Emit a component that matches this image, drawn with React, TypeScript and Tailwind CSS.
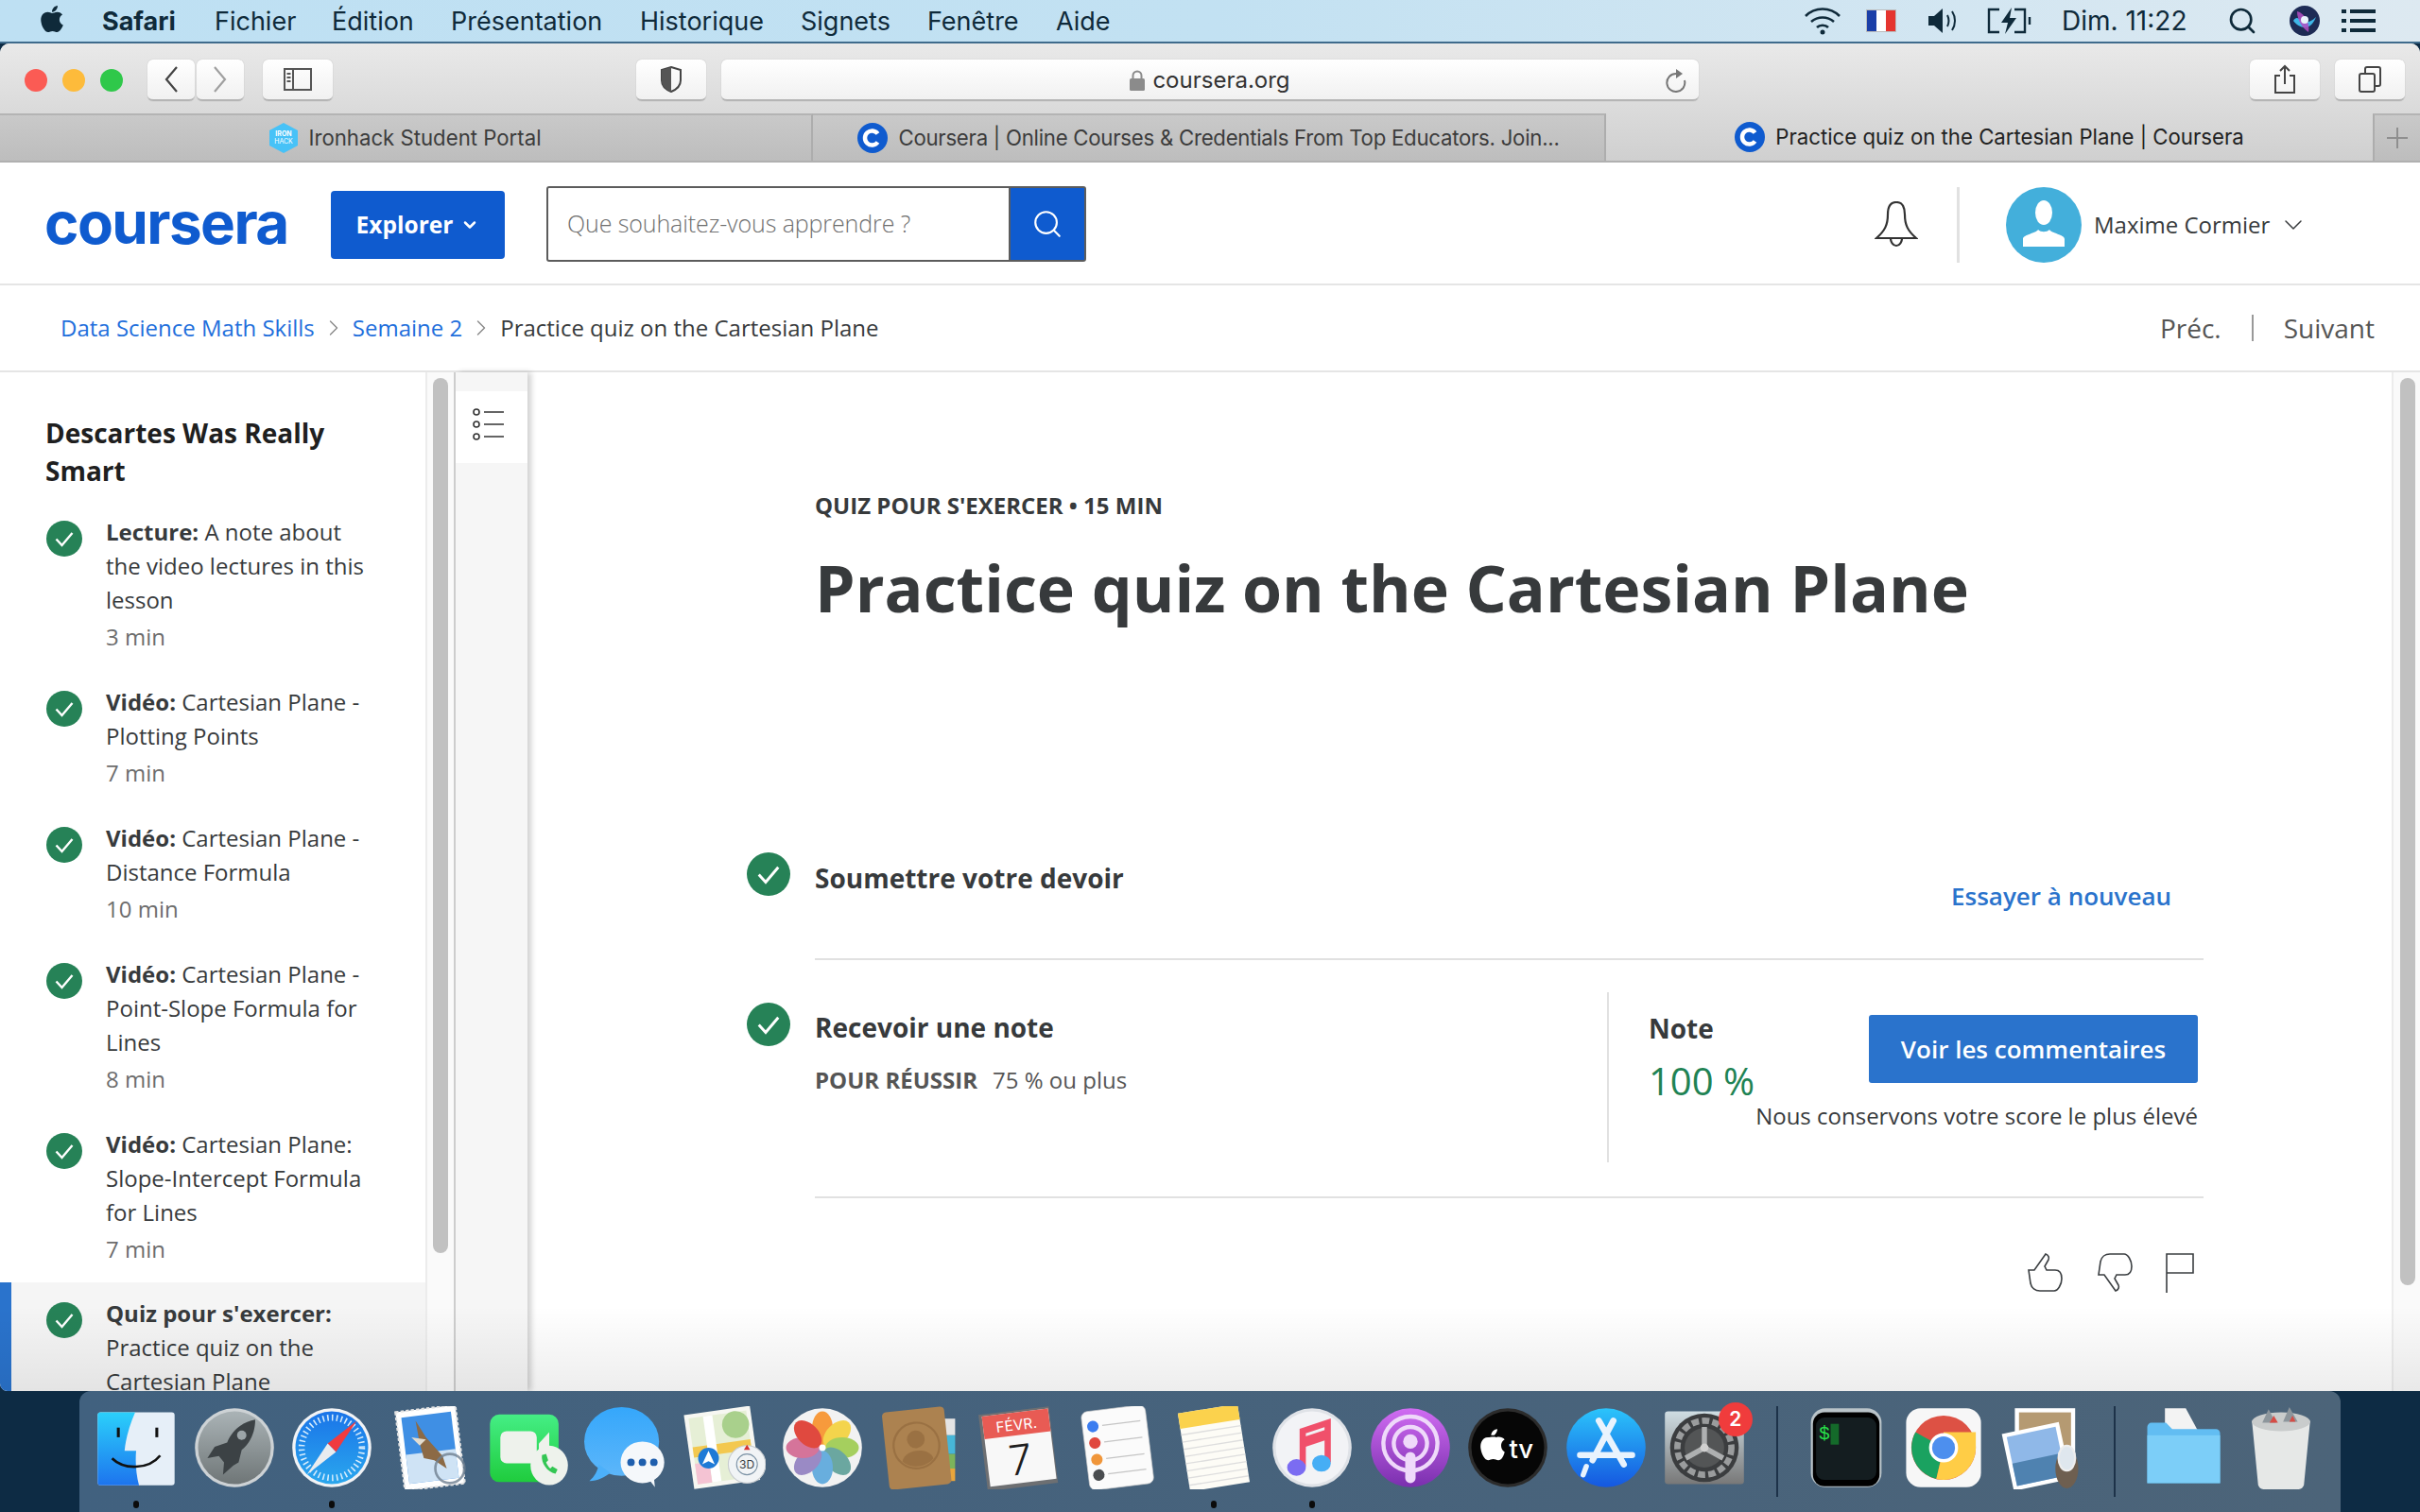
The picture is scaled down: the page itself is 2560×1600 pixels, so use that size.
import { ChevronDown, ChevronRight, Search } from "lucide-react";
import { FaApple } from "react-icons/fa";
import type { ReactNode } from "react";

const MENUS = [
  { label: "Fichier", w: "w-[86px]" },
  { label: "Édition", w: "w-[88px]" },
  { label: "Présentation", w: "w-[162px]" },
  { label: "Historique", w: "w-[132px]" },
  { label: "Signets", w: "w-[96px]" },
  { label: "Fenêtre", w: "w-[98px]" },
  { label: "Aide", w: "w-[57px]" },
];

const LESSONS = [
  { kind: "Lecture:", title: "A note about the video lectures in this lesson", time: "3 min" },
  { kind: "Vidéo:", title: "Cartesian Plane - Plotting Points", time: "7 min" },
  { kind: "Vidéo:", title: "Cartesian Plane - Distance Formula", time: "10 min" },
  { kind: "Vidéo:", title: "Cartesian Plane - Point-Slope Formula for Lines", time: "8 min" },
  { kind: "Vidéo:", title: "Cartesian Plane: Slope-Intercept Formula for Lines", time: "7 min" },
];

function CheckBadge({ size }: { size: number }) {
  return (
    <svg width={size} height={size} viewBox="0 0 38 38" className="shrink-0">
      <circle cx="19" cy="19" r="19" fill="#268257" />
      <path d="M10.5 19.5l6 6.5L27.5 13" fill="none" stroke="#fff" strokeWidth="2.4" />
    </svg>
  );
}

function CourseraFavicon() {
  return (
    <svg width="32" height="32" viewBox="0 0 32 32" className="shrink-0">
      <circle cx="16" cy="16" r="16" fill="#0f5bcf" />
      <path d="M21.5 11.5a7.5 7.5 0 1 0 0 9" fill="none" stroke="#fff" strokeWidth="4.5" />
    </svg>
  );
}

function IronhackFavicon() {
  return (
    <svg width="30" height="32" viewBox="0 0 30 32" className="shrink-0">
      <polygon points="15,0 30,8 30,24 15,32 0,24 0,8" fill="#47c2f7" />
      <text x="15" y="14" textAnchor="middle" fontSize="7" fontWeight="700" fill="#fff" fontFamily="Inter">IRON</text>
      <text x="15" y="22" textAnchor="middle" fontSize="7" fill="#fff" fontFamily="Inter">HACK</text>
    </svg>
  );
}

function ToolButton({ className, children }: { className: string; children?: ReactNode }) {
  return (
    <div className={`h-[44px] bg-gradient-to-b from-white to-[#f1f1f1] rounded-[6px] border-b-2 border-[#b5b5b5] shadow-[0_0_1px_rgba(0,0,0,0.3)] flex items-center justify-center ${className}`}>
      {children}
    </div>
  );
}

function Tab({ className, icon, label, active }: { className: string; icon: ReactNode; label: string; active?: boolean }) {
  return (
    <div className={`h-full flex items-center justify-center gap-[11px] text-[22.2px] ${active ? "text-[#222]" : "text-[#3c3c3c] border-r-2 border-[#adadad] bg-gradient-to-b from-[#c9c9c9] to-[#bdbdbd] border-t-2 border-t-[#b4b4b4]"} ${className}`}>
      {icon}
      <span className="whitespace-nowrap">{label}</span>
    </div>
  );
}

function Vert({ id, from, to }: { id: string; from: string; to: string }) {
  return (
    <defs>
      <linearGradient id={id} x1="0" y1="0" x2="0" y2="1">
        <stop offset="0" stopColor={from} />
        <stop offset="1" stopColor={to} />
      </linearGradient>
    </defs>
  );
}

/* dock icons, all on an 80 x 80 canvas */
const DOCK: { el: ReactNode; dot?: boolean }[] = [
  {
    dot: true,
    el: (
      <g transform="translate(3 4) scale(0.925)">
        <Vert id="finder" from="#2bd0fb" to="#1d74ee" />
        <rect x="0" y="2" width="80" height="76" rx="3" fill="#e6eff8" />
        <path d="M3 2h36c-6 14-10 28-11 40h12c-1 12 0 25 3 36H3a3 3 0 0 1-3-3V5a3 3 0 0 1 3-3z" fill="url(#finder)" />
        <rect x="20" y="18" width="3" height="10" fill="#111" />
        <rect x="60" y="18" width="3" height="10" fill="#111" />
        <path d="M15 50c12 12 38 12 50-3" fill="none" stroke="#111" strokeWidth="2.6" />
      </g>
    ),
  },
  {
    el: (
      <>
        <Vert id="launch" from="#aab3b6" to="#6f7677" />
        <circle cx="40" cy="40" r="38" fill="#cdd2d5" />
        <circle cx="40" cy="40" r="35" fill="url(#launch)" />
        <path d="M60 13c-12 2-22 10-27 22l-12 4-7 11 11-2 5 6-1 12 10-9 5-3 3-12c9-7 13-18 13-29z" fill="#3c4245" />
        <circle cx="47" cy="28" r="4.5" fill="#9ca5a8" />
      </>
    ),
  },
  {
    dot: true,
    el: (
      <>
        <Vert id="safari" from="#1a74e8" to="#2aa7ee" />
        <circle cx="40" cy="40" r="38" fill="#f2f3f5" />
        <circle cx="40" cy="40" r="35" fill="url(#safari)" />
        <circle cx="40" cy="40" r="29" fill="none" stroke="#d6ecfc" strokeWidth="6" strokeDasharray="1.4 3" />
        <polygon points="64,14 36,36 44,44" fill="#f03b3f" />
        <polygon points="16,66 36,36 44,44" fill="#e9ecef" />
      </>
    ),
  },
  {
    el: (
      <>
        <g transform="rotate(-7 40 40)">
          <rect x="11" y="2" width="58" height="76" fill="#fff" stroke="#e4e4e4" strokeWidth="2" strokeDasharray="3 2" />
          <rect x="16" y="8" width="48" height="64" fill="#3f8fe4" />
          <rect x="16" y="44" width="48" height="28" fill="#cfe3f5" />
        </g>
        <path d="M26 14l10 16 16 18 4 12-12-8-10-2-4-14z" fill="#8c6a45" />
        <path d="M30 38l-8-8 14 2z" fill="#e2dccf" />
        <circle cx="59" cy="60" r="14" fill="none" stroke="#6f7f90" strokeWidth="2.4" opacity="0.8" />
      </>
    ),
  },
  {
    el: (
      <>
        <Vert id="ft" from="#45ee85" to="#1fcc3d" />
        <rect x="3" y="8" width="66" height="65" rx="9" fill="url(#ft)" />
        <rect x="13" y="24" width="35" height="31" rx="6" fill="#eef2ec" />
        <polygon points="50,36 60,25 60,54 50,44" fill="#eef2ec" />
        <ellipse cx="60" cy="57" rx="18" ry="19" fill="#eef2ec" />
        <path d="M53 47c-1 8 5 16 13 18l2-4-5-3-2 2c-2-2-3-4-4-6l2-2-2-6z" fill="#33c653" />
      </>
    ),
  },
  {
    el: (
      <>
        <Vert id="msg" from="#35a7fb" to="#5cb6fa" />
        <ellipse cx="36" cy="34" rx="36" ry="33" fill="url(#msg)" />
        <path d="M14 56c-1 6-4 12-9 16 8 0 15-4 20-8z" fill="#4cb0fa" />
        <ellipse cx="56" cy="54" rx="21" ry="20" fill="#f5f8fb" />
        <path d="M62 70l6 8-1-10z" fill="#f5f8fb" />
        <circle cx="45" cy="54" r="3.6" fill="#1f5fae" />
        <circle cx="56" cy="54" r="3.6" fill="#1f5fae" />
        <circle cx="67" cy="54" r="3.6" fill="#1f5fae" />
      </>
    ),
  },
  {
    el: (
      <>
        <g transform="rotate(-8 36 40)">
          <rect x="6" y="4" width="64" height="72" fill="#f7f7f2" />
          <rect x="10" y="8" width="56" height="64" fill="#e6efd6" />
          <rect x="10" y="36" width="56" height="10" fill="#f3c84f" />
          <rect x="24" y="8" width="9" height="64" fill="#fff" />
          <rect x="10" y="52" width="14" height="20" fill="#f4c3d3" />
          <circle cx="54" cy="20" r="13" fill="#a9d08c" />
        </g>
        <circle cx="25" cy="50" r="10" fill="#1f7ad6" />
        <polygon points="25,43 31,56 25,53 19,56" fill="#fff" />
        <circle cx="62" cy="56" r="18" fill="#f1f4f6" stroke="#c8ccd0" />
        <circle cx="62" cy="56" r="10" fill="none" stroke="#7c93a6" />
        <text x="62" y="60" textAnchor="middle" fontSize="11" fill="#3a3f44" fontFamily="Inter">3D</text>
        <polygon points="62,37 65,42 59,42" fill="#d6322f" />
      </>
    ),
  },
  {
    el: (
      <>
        <circle cx="40" cy="40" r="38" fill="#f2f2f2" />
        <ellipse cx="40" cy="21" rx="10" ry="16" fill="#f79a3c" />
        <ellipse cx="54" cy="27" rx="10" ry="16" fill="#f4d44c" transform="rotate(45 54 27)" />
        <ellipse cx="59" cy="40" rx="16" ry="10" fill="#a5cf5e" />
        <ellipse cx="54" cy="53" rx="10" ry="16" fill="#6ba7a0" transform="rotate(-45 54 53)" />
        <ellipse cx="40" cy="59" rx="10" ry="16" fill="#68aede" />
        <ellipse cx="26" cy="53" rx="10" ry="16" fill="#9a8ac5" transform="rotate(45 26 53)" />
        <ellipse cx="21" cy="40" rx="16" ry="10" fill="#d5749a" />
        <ellipse cx="26" cy="27" rx="10" ry="16" fill="#e0493f" transform="rotate(-45 26 27)" />
        <circle cx="40" cy="40" r="3" fill="#fff" />
      </>
    ),
  },
  {
    el: (
      <>
        <rect x="60" y="12" width="14" height="16" fill="#e4e4e4" />
        <rect x="60" y="28" width="14" height="18" fill="#47b6d8" />
        <rect x="60" y="46" width="14" height="14" fill="#7cb35b" />
        <rect x="60" y="60" width="14" height="12" fill="#e8a53c" />
        <g transform="rotate(-6 36 40)">
          <rect x="7" y="3" width="60" height="75" rx="4" fill="#ac8250" />
          <circle cx="37" cy="38" r="22" fill="none" stroke="#9a7143" strokeWidth="2" />
          <circle cx="37" cy="32" r="8.5" fill="#9a7143" />
          <path d="M22 52c3-12 27-12 30 0-8 8-22 8-30 0z" fill="#9a7143" />
        </g>
      </>
    ),
  },
  {
    el: (
      <g transform="rotate(-7 40 40)">
        <rect x="6" y="4" width="68" height="74" fill="#6d6f72" />
        <rect x="9" y="6" width="64" height="68" fill="#f8f8f8" />
        <rect x="9" y="6" width="64" height="22" fill="#e85b54" />
        <text x="41" y="23" textAnchor="middle" fontSize="14" fill="#fff" fontFamily="Inter">FÉVR.</text>
        <text x="41" y="66" textAnchor="middle" fontSize="40" fill="#1e1e1e" fontFamily="Inter" fontWeight="300">7</text>
      </g>
    ),
  },
  {
    el: (
      <g transform="rotate(-7 40 40)">
        <rect x="10" y="2" width="62" height="76" rx="6" fill="#fbfbfb" stroke="#ccc" strokeWidth="0.6" />
        {[
          ["#3b7df0", 17],
          ["#e0483e", 33],
          ["#f0963a", 49],
          ["#4a4d50", 64],
        ].map(([c, y]) => (
          <g key={String(c)}>
            <circle cx="20" cy={Number(y)} r="5.5" fill={String(c)} />
            <line x1="29" x2="66" y1={Number(y)} y2={Number(y)} stroke="#c5c5c5" strokeWidth="1.2" />
          </g>
        ))}
      </g>
    ),
  },
  {
    dot: true,
    el: (
      <g transform="rotate(-9 40 40)">
        <rect x="11" y="2" width="58" height="76" fill="#fdfcf6" />
        <rect x="11" y="2" width="58" height="15" fill="#fbd24d" />
        {[23, 30, 37, 44, 51, 58, 65, 72].map((y) => (
          <line key={y} x1="11" x2="69" y1={y} y2={y} stroke="#dedede" strokeWidth="1.2" />
        ))}
      </g>
    ),
  },
  {
    dot: true,
    el: (
      <>
        <circle cx="40" cy="40" r="38" fill="#dfe2e7" />
        <circle cx="40" cy="40" r="35" fill="#f2f3f6" />
        <path d="M31 58V24l24-8v38" fill="none" stroke="#f0506b" strokeWidth="6" />
        <path d="M31 30l24-8v10l-24 8z" fill="#f0506b" />
        <ellipse cx="25" cy="59" rx="9" ry="8" fill="#7b6cf2" />
        <ellipse cx="49" cy="55" rx="9" ry="8" fill="#46aef5" />
      </>
    ),
  },
  {
    el: (
      <>
        <Vert id="pod" from="#d06cf2" to="#7a2fae" />
        <circle cx="40" cy="40" r="38" fill="url(#pod)" />
        <circle cx="40" cy="36" r="26" fill="none" stroke="#efd9fa" strokeWidth="4" />
        <circle cx="40" cy="36" r="16" fill="none" stroke="#efd9fa" strokeWidth="4" />
        <circle cx="40" cy="34" r="7" fill="#efd9fa" />
        <rect x="35" y="44" width="10" height="30" rx="5" fill="#efd9fa" />
      </>
    ),
  },
  {
    el: (
      <>
        <circle cx="40" cy="40" r="38" fill="#2c2c2c" />
        <circle cx="40" cy="40" r="35" fill="#060606" />
        <text x="53" y="50" textAnchor="middle" fontSize="25" fill="#fff" fontFamily="Inter" fontWeight="500">tv</text>
        <path d="M29 30c-3-1-6 0-8 0-5 0-8 5-7 11 1 6 4 11 7 11 2 0 3-1 5-1s3 1 5 1c3 0 5-4 6-8-4-2-5-9 0-12-2-2-5-3-8-2zM27 28c2-2 3-4 3-6-3 0-6 3-6 6z" fill="#fff" />
      </>
    ),
  },
  {
    el: (
      <>
        <Vert id="store" from="#2bc4fb" to="#1557e0" />
        <circle cx="40" cy="40" r="38" fill="url(#store)" />
        <path d="M47 14L27 52M33 14l24 42M15 47h50" stroke="#e9f3fd" strokeWidth="6" strokeLinecap="round" fill="none" />
        <path d="M21 58l-3 8" stroke="#e9f3fd" strokeWidth="5" strokeLinecap="round" />
      </>
    ),
  },
  {
    el: (
      <>
        <Vert id="prefs" from="#cfdde3" to="#787878" />
        <rect x="2" y="5" width="76" height="70" rx="3" fill="url(#prefs)" />
        <circle cx="40" cy="40" r="33" fill="#3b3d3f" />
        <circle cx="40" cy="40" r="26" fill="none" stroke="#9a9c9d" strokeWidth="6" strokeDasharray="7 3" />
        <circle cx="40" cy="40" r="19" fill="#535556" />
        <path d="M40 40V20M40 40l18 10M40 40L22 50" stroke="#aeb0b1" strokeWidth="5" />
        <circle cx="40" cy="40" r="4" fill="#d0d0d0" />
      </>
    ),
  },
  {
    el: (
      <>
        <rect x="6" y="2" width="68" height="76" rx="14" fill="#b9c3c8" />
        <rect x="8" y="6" width="64" height="71" rx="11" fill="#000" />
        <rect x="11" y="11" width="58" height="60" rx="8" fill="#141d20" />
        <text x="19" y="32" textAnchor="middle" fontSize="18" fill="#28e04a" fontFamily="Liberation Mono">$</text>
        <rect x="25" y="17" width="8" height="20" fill="#146a2a" />
      </>
    ),
  },
  {
    el: (
      <>
        <rect x="4" y="2" width="72" height="76" rx="14" fill="#f7f7f7" />
        <circle cx="40" cy="40" r="31" fill="#dd5144" />
        <path d="M40 40L13 25A31 31 0 0 0 33 70z" fill="#1aa260" />
        <path d="M40 40L33 70A31 31 0 0 0 71 40V25H40z" fill="#ffcd46" />
        <circle cx="40" cy="40" r="14" fill="#fff" />
        <circle cx="40" cy="40" r="11" fill="#4d8fee" />
      </>
    ),
  },
  {
    el: (
      <>
        <rect x="14" y="2" width="58" height="60" fill="#fff" />
        <rect x="18" y="6" width="50" height="46" fill="#b59a72" />
        <g transform="rotate(-12 36 45)">
          <rect x="6" y="20" width="56" height="56" fill="#fff" />
          <rect x="10" y="24" width="48" height="48" fill="#8fb8e8" />
          <rect x="10" y="50" width="48" height="22" fill="#4f82b0" />
        </g>
        <ellipse cx="64" cy="60" rx="11" ry="19" fill="#6e5f50" />
        <ellipse cx="64" cy="50" rx="8" ry="12" fill="#dfe7ee" stroke="#eee" strokeWidth="2" />
      </>
    ),
  },
  {
    el: (
      <>
        <path d="M22 2h20l14 26H22z" fill="#f3f3f3" />
        <path d="M5 20a4 4 0 0 1 4-4h14l6 6h42a4 4 0 0 1 4 4v48H5z" fill="#62bdf2" />
        <rect x="5" y="28" width="70" height="46" fill="#7ccef8" />
      </>
    ),
  },
  {
    el: (
      <>
        <path d="M12 14h56l-6 62a6 6 0 0 1-6 4H24a6 6 0 0 1-6-4z" fill="#e6e8e7" />
        <ellipse cx="40" cy="15" rx="28" ry="9" fill="#c9cccc" />
        <path d="M22 16l6-13 7 13zM42 15l6-14 8 14z" fill="#8d969c" />
        <path d="M29 16l4-7 4 7zM48 15l3-6 3 6z" fill="#d64c45" />
      </>
    ),
  },
];

function DockSlot({ el, dot, badge }: { el: ReactNode; dot?: boolean; badge?: boolean }) {
  return (
    <div className="w-[103.7px] h-full relative flex flex-col items-center pt-[16px]">
      <svg width="88" height="88" viewBox="0 0 80 80">{el}</svg>
      {dot && <span className="mt-[12px] w-[6px] h-[8px] rounded-full bg-[#0b0b0b]" />}
      {badge && (
        <span className="absolute top-[12px] right-[1px] w-[36px] h-[36px] rounded-full bg-[#f03c3c] text-white text-[21px] font-semibold flex items-center justify-center">
          2
        </span>
      )}
    </div>
  );
}

function DockSep() {
  return (
    <div className="w-[46px] h-full flex justify-center pl-[5px] pt-[16px]">
      <span className="w-[2px] h-[96px] bg-[#1d3249]" />
    </div>
  );
}

export default function App() {
  return (
    <div className="w-[2560px] h-[1600px] overflow-hidden flex flex-col bg-[#0d2b44] font-['Inter',sans-serif]">
      {/* menu bar */}
      <div className="h-[46px] shrink-0 flex items-center justify-between bg-gradient-to-r from-[#bee0f3] via-[#c2e1f2] to-[#dde9f1] border-b-2 border-[#3f6b8c] text-[#0f2a3a] text-[27px]">
        <div className="flex items-center pt-[2px]">
          <FaApple className="ml-[40px] w-[30px] h-[32px] -mt-[6px] text-[#0f2a3a]" />
          <span className="ml-[38px] w-[81px] font-bold whitespace-nowrap">Safari</span>
          {MENUS.map((m) => (
            <span key={m.label} className={`ml-[38px] whitespace-nowrap ${m.w}`}>
              {m.label}
            </span>
          ))}
        </div>
        <div className="flex items-center">
          <svg width="42" height="32" viewBox="0 0 42 32" fill="none" stroke="#0f2a3a" strokeWidth="2.6">
            <path d="M3 11c10-10 26-10 36 0M9 17c7-6 17-6 24 0M15 23c3-3 9-3 12 0" />
            <circle cx="21" cy="28" r="2.5" fill="#0f2a3a" stroke="none" />
          </svg>
          <div className="ml-[25px] w-[32px] h-[24px] flex border border-[#bbb]">
            <span className="flex-1 bg-[#1b3fa8]" />
            <span className="flex-1 bg-white" />
            <span className="flex-1 bg-[#e5352f]" />
          </div>
          <svg className="ml-[32px]" width="34" height="30" viewBox="0 0 34 30" fill="none" stroke="#0f2a3a" strokeWidth="2">
            <path d="M2 10h6l9-8v26l-9-8H2z" fill="#0f2a3a" stroke="none" />
            <path d="M22 9c2 4 2 8 0 12M27 5c4 6 4 14 0 20" />
          </svg>
          <svg className="ml-[29px]" width="48" height="30" viewBox="0 0 48 30" fill="none" stroke="#0f2a3a" strokeWidth="2.4">
            <path d="M14 3H3v24h11M30 3h11v24H30M46 11v8" />
            <path d="M27 1L16 17h7l-3 12 12-17h-7z" fill="#0f2a3a" stroke="none" />
          </svg>
          <span className="ml-[32px] w-[134px] whitespace-nowrap text-[28px]">Dim. 11:22</span>
          <Search className="ml-[41px] w-[32px] h-[32px]" strokeWidth={2} />
          <svg className="ml-[34px]" width="32" height="32" viewBox="0 0 32 32">
            <circle cx="16" cy="16" r="16" fill="#1d2b55" />
            <path d="M4 16c6-10 10 10 24-4-6 16-18 12-24 4z" fill="#3fb7e8" />
            <path d="M8 6c8 2 14 12 12 22C14 24 8 16 8 6z" fill="#b34fc4" opacity="0.85" />
            <circle cx="16" cy="15" r="4" fill="#e8f3fb" />
          </svg>
          <svg className="ml-[23px] mr-[47px]" width="36" height="26" viewBox="0 0 36 26" fill="#0f2a3a">
            <rect x="0" y="1" width="5" height="4" />
            <rect x="9" y="1" width="27" height="4" />
            <rect x="0" y="11" width="5" height="4" />
            <rect x="9" y="11" width="27" height="4" />
            <rect x="0" y="21" width="5" height="4" />
            <rect x="9" y="21" width="27" height="4" />
          </svg>
        </div>
      </div>

      {/* safari window */}
      <div className="h-[1426px] shrink-0 relative flex flex-col overflow-hidden rounded-t-[10px] rounded-bl-[8px] bg-white">
        <div className="h-[126px] shrink-0 flex flex-col bg-gradient-to-b from-[#e9e9e9] to-[#cfcfcf]">
          <div className="h-[74px] shrink-0 flex items-center pt-[3px]">
            <span className="ml-[26px] w-[24px] h-[24px] rounded-full bg-[#fb5b54]" />
            <span className="ml-[16px] w-[24px] h-[24px] rounded-full bg-[#fdbb3b]" />
            <span className="ml-[16px] w-[24px] h-[24px] rounded-full bg-[#2fc84a]" />
            <ToolButton className="ml-[26px] w-[50px]">
              <svg width="16" height="30" viewBox="0 0 16 30" fill="none" stroke="#444" strokeWidth="2.2"><path d="M14 2L3 15l11 13" /></svg>
            </ToolButton>
            <ToolButton className="ml-[2px] w-[50px]">
              <svg width="16" height="30" viewBox="0 0 16 30" fill="none" stroke="#a0a0a0" strokeWidth="2.2"><path d="M2 2l11 13L2 28" /></svg>
            </ToolButton>
            <ToolButton className="ml-[20px] w-[74px]">
              <svg width="30" height="24" viewBox="0 0 30 24" fill="none" stroke="#555" strokeWidth="2">
                <rect x="1" y="1" width="28" height="22" />
                <path d="M10 1v22" />
                <path d="M3.5 6h4M3.5 10h4M3.5 14h4" />
              </svg>
            </ToolButton>
            <ToolButton className="ml-[321px] w-[74px]">
              <svg width="24" height="28" viewBox="0 0 24 28">
                <path d="M12 1l10 3v11c0 6-5 10-10 12C7 25 2 21 2 15V4z" fill="none" stroke="#444" strokeWidth="2" />
                <path d="M12 1L2 4v11c0 6 5 10 10 12z" fill="#555" />
              </svg>
            </ToolButton>
            <ToolButton className="ml-[16px] w-[1034px] relative pt-[2px]">
              <svg className="mr-[8px]" width="16" height="22" viewBox="0 0 16 22" fill="#8b8b8b">
                <rect x="0" y="9" width="16" height="13" rx="1.5" />
                <path d="M3.5 9V6a4.5 4.5 0 0 1 9 0v3" fill="none" stroke="#8b8b8b" strokeWidth="2" />
              </svg>
              <span className="text-[24px] text-[#333] leading-none">coursera.org</span>
              <svg className="absolute right-[12px] top-[9px]" width="24" height="28" viewBox="0 0 24 28" fill="none" stroke="#777" strokeWidth="2">
                <path d="M12 6a9.5 9.5 0 1 0 9 7" />
                <path d="M12 1l7 5-7 5z" fill="#777" stroke="none" />
              </svg>
            </ToolButton>
            <ToolButton className="ml-[583px] w-[74px]">
              <svg width="24" height="32" viewBox="0 0 24 32" fill="none" stroke="#444" strokeWidth="2">
                <path d="M7 12H2v18h20V12h-5M12 21V2M7 7l5-5 5 5" />
              </svg>
            </ToolButton>
            <ToolButton className="ml-[16px] w-[74px]">
              <svg width="26" height="28" viewBox="0 0 26 28" fill="none" stroke="#444" strokeWidth="2">
                <rect x="2" y="8" width="16" height="19" rx="2" />
                <path d="M8 8V3a2 2 0 0 1 2-2h12a2 2 0 0 1 2 2v16a2 2 0 0 1-2 2h-4" />
              </svg>
            </ToolButton>
          </div>
          <div className="h-[52px] shrink-0 flex border-b-2 border-[#b0b0b0]">
            <Tab className="w-[860px]" icon={<IronhackFavicon />} label="Ironhack Student Portal" />
            <Tab className="w-[839px] tracking-[-0.25px]" icon={<CourseraFavicon />} label="Coursera | Online Courses & Credentials From Top Educators. Join..." />
            <Tab className="w-[811px]" active icon={<CourseraFavicon />} label="Practice quiz on the Cartesian Plane | Coursera" />
            <div className="flex-1 flex items-center justify-center bg-gradient-to-b from-[#c9c9c9] to-[#bdbdbd] border-l-2 border-[#adadad] border-t-2 border-t-[#b4b4b4]">
              <svg width="22" height="22" viewBox="0 0 22 22" stroke="#8f8f8f" strokeWidth="2"><path d="M11 0v22M0 11h22" /></svg>
            </div>
          </div>
        </div>

        <div className="flex-1 min-h-0 flex flex-col font-['Open_Sans',sans-serif] text-[#373a3c]">
          {/* coursera header */}
          <div className="h-[130px] shrink-0 flex items-center border-b-2 border-[#e5e5e5] pt-[4px]">
            <span className="ml-[47px] w-[256px] text-[#0f5bcf] text-[62px] leading-none font-bold tracking-[-1.6px] font-['Inter',sans-serif] -mt-[4px] whitespace-nowrap">coursera</span>
            <div className="ml-[47px] w-[184px] h-[72px] rounded-[4px] bg-[#0f5bcf] text-white font-bold text-[24.5px] flex items-center justify-center gap-[8px]">
              Explorer
              <ChevronDown className="w-[20px] h-[20px]" strokeWidth={3} />
            </div>
            <div className="ml-[44px] w-[571px] h-[80px] flex border-2 border-[#5c5c5c] rounded-[3px] -mt-[2px]">
              <div className="flex-1 flex items-center pl-[20px] text-[25px] tracking-[-0.1px] font-light text-[#6f6f6f]">Que souhaitez-vous apprendre ?</div>
              <div className="w-[80px] bg-[#0f5bcf] flex items-center justify-center border-l-2 border-[#5c5c5c]">
                <Search className="w-[34px] h-[34px] text-white" strokeWidth={1.5} />
              </div>
            </div>
            <svg className="ml-[834px] shrink-0" width="46" height="50" viewBox="0 0 46 50" fill="none" stroke="#333" strokeWidth="2.2">
              <path d="M23 1c-7 0-9 6-9 13 0 11-3 17-12 25h42c-9-8-12-14-12-25 0-7-2-13-9-13z" />
              <path d="M17 39a6 8 0 0 0 12 0" />
            </svg>
            <span className="ml-[41px] w-[3px] h-[80px] bg-[#e1e1e1]" />
            <svg className="ml-[49px] shrink-0" width="80" height="80" viewBox="0 0 80 80">
              <circle cx="40" cy="40" r="40" fill="#43afdb" />
              <ellipse cx="40" cy="27" rx="9" ry="13" fill="#fff" />
              <path d="M18 63v-8c0-5 14-6 16-10 3 3 9 3 12 0 2 4 16 5 16 10v8z" fill="#fff" />
            </svg>
            <span className="ml-[13px] text-[24px] whitespace-nowrap">Maxime Cormier</span>
            <ChevronDown className="ml-[9px] w-[32px] h-[32px]" strokeWidth={1.1} />
          </div>

          {/* breadcrumb */}
          <div className="h-[92px] shrink-0 flex items-center border-b-2 border-[#e5e5e5] text-[24px] pl-[64px] pr-[48px]">
            <span className="text-[#1f6fdc]">Data Science Math Skills</span>
            <ChevronRight className="mx-[6px] w-[28px] h-[28px] text-[#888]" strokeWidth={1.2} />
            <span className="text-[#1f6fdc]">Semaine 2</span>
            <ChevronRight className="mx-[6px] w-[28px] h-[28px] text-[#888]" strokeWidth={1.2} />
            <span>Practice quiz on the Cartesian Plane</span>
            <div className="ml-auto flex items-center text-[28px] text-[#555]">
              <span>Préc.</span>
              <span className="mx-[32px] w-[2px] h-[28px] bg-[#999]" />
              <span>Suivant</span>
            </div>
          </div>

          <div className="flex-1 min-h-0 flex">
            {/* lesson list */}
            <div className="w-[450px] shrink-0 overflow-hidden flex flex-col pt-[44px]">
              <h2 className="px-[48px] text-[28px] leading-[40px] font-bold text-[#1f1f1f]">Descartes Was Really Smart</h2>
              <div className="mt-[27px] flex flex-col gap-[32px]">
                {LESSONS.map((l, i) => (
                  <div key={i} className="flex pl-[49px] pr-[56px]">
                    <div className="pt-[6px]"><CheckBadge size={38} /></div>
                    <div className="ml-[25px]">
                      <p className="text-[24px] leading-[36px]">
                        <b className="font-bold">{l.kind}</b> {l.title}
                      </p>
                      <p className="pt-[2px] text-[24px] leading-[38px] text-[#6d6d6d]">{l.time}</p>
                    </div>
                  </div>
                ))}
              </div>
              <div className="mt-[16px] pt-[15px] flex-1 bg-[#f5f5f5] border-l-[12px] border-[#2a73cc] flex pl-[37px] pr-[44px] rounded-bl-[8px]">
                <div className="pt-[6px]"><CheckBadge size={38} /></div>
                <p className="ml-[25px] text-[24px] leading-[36px]">
                  <b className="font-bold">Quiz pour s'exercer:</b> Practice quiz on the Cartesian Plane
                </p>
              </div>
            </div>
            <div className="w-[32px] shrink-0 pl-[6px] pt-[6px] border-l-2 border-r-2 border-l-[#ececec] border-r-[#cfcfcf] bg-[#fafafa]">
              <div className="w-[16px] h-[926px] rounded-full bg-[#c1c1c1]" />
            </div>
            <div className="w-[76px] shrink-0 bg-[#f6f6f6] pt-[20px] shadow-[4px_0_6px_rgba(0,0,0,0.18)] relative">
              <div className="h-[76px] bg-white flex items-center justify-center pr-[6px] pb-[6px]">
                <svg width="34" height="34" viewBox="0 0 34 34" fill="none" stroke="#333" strokeWidth="1.6">
                  <circle cx="4" cy="4" r="3" />
                  <circle cx="4" cy="17" r="3" />
                  <circle cx="4" cy="30" r="3" />
                  <path d="M12 4h21M12 17h21M12 30h21" />
                </svg>
              </div>
            </div>

            {/* quiz page */}
            <div className="flex-1 min-w-0 pl-[232px] pr-[199px] pt-[126px]">
              <p className="pl-[72px] text-[24px] leading-[30px] font-bold">QUIZ POUR S'EXERCER • 15 MIN</p>
              <h1 className="pl-[72px] mt-[28px] text-[68px] leading-[88px] font-bold whitespace-nowrap">Practice quiz on the Cartesian Plane</h1>
              <div className="mt-[236px] flex">
                <CheckBadge size={46} />
                <div className="ml-[26px] flex-1 flex justify-between border-b-2 border-[#e1e1e1] h-[114px]">
                  <span className="text-[28px] leading-[38px] font-bold pt-[8px]">Soumettre votre devoir</span>
                  <span className="pr-[34px] pt-[27px] text-[26px] leading-[38px] font-semibold text-[#2a73cc]">Essayer à nouveau</span>
                </div>
              </div>
              <div className="mt-[34px] flex">
                <div className="pt-[11px] shrink-0"><CheckBadge size={46} /></div>
                <div className="ml-[26px] flex-1 flex border-b-2 border-[#e1e1e1] h-[218px]">
                  <div className="w-[838px] shrink-0 h-[180px] pt-[18px]">
                    <p className="text-[28px] leading-[38px] font-bold">Recevoir une note</p>
                    <p className="mt-[20px] text-[24px] leading-[34px]">
                      <b className="font-bold text-[#555]">POUR RÉUSSIR</b>
                      <span className="ml-[16px] text-[#555]">75 % ou plus</span>
                    </p>
                  </div>
                  <div className="w-[625px] h-[180px] border-l-2 border-[#e1e1e1] pl-[42px] flex justify-between">
                    <div className="pt-[19px]">
                      <p className="text-[28px] leading-[38px] font-bold">Note</p>
                      <p className="mt-[10px] text-[40px] leading-[54px] text-[#1f8354] whitespace-nowrap">100 %</p>
                    </div>
                    <div className="flex flex-col items-end pt-[24px]">
                      <div className="w-[348px] h-[72px] bg-[#2a73cc] rounded-[3px] text-white text-[26px] font-semibold flex items-center justify-center">Voir les commentaires</div>
                      <p className="mt-[17px] text-[24px] leading-[36px] whitespace-nowrap">Nous conservons votre score le plus élevé</p>
                    </div>
                  </div>
                </div>
              </div>
              <div className="mt-[58px] pr-[10px] flex justify-end items-start">
                <svg width="38" height="42" viewBox="0 0 38 42" fill="none" stroke="#3b3f42" strokeWidth="1.6">
                  <path d="M1 18h6L19 1c3 1 4 4 3 6l-4 7 2 4h9c5 0 7 4 7 9 0 6-4 13-8 13H13c-5 0-9-3-10-8z" />
                </svg>
                <svg className="ml-[36px]" width="38" height="42" viewBox="0 0 38 42" fill="none" stroke="#3b3f42" strokeWidth="1.6">
                  <path d="M1 23h6l12 17c3-1 4-4 3-6l-4-7 2-4h9c5 0 7-4 7-9 0-6-4-13-8-13H13C8 1 4 4 3 9z" />
                </svg>
                <svg className="ml-[34px]" width="30" height="42" viewBox="0 0 30 42" fill="none" stroke="#3b3f42" strokeWidth="1.6">
                  <path d="M1 42V1h28v20H1" />
                </svg>
              </div>
            </div>
            <div className="w-[30px] shrink-0 pt-[6px] pl-[7px] border-l-2 border-[#ececec] bg-[#fafafa]">
              <div className="w-[16px] h-[960px] rounded-full bg-[#c1c1c1]" />
            </div>
          </div>
        </div>

        {/* shadow the dock throws on the window */}
        <div className="absolute left-0 right-0 bottom-0 h-[90px] bg-gradient-to-b from-transparent to-black/[0.07] pointer-events-none" />
      </div>

      {/* dock */}
      <div className="h-[128px] shrink-0 ml-[84px] w-[2392px] pl-[8px] rounded-t-[12px] flex bg-gradient-to-r from-[#41617f] to-[#4c6479] text-white">
        {DOCK.slice(0, 16).map((d, i) => (
          <DockSlot key={i} el={d.el} dot={d.dot} />
        ))}
        <DockSlot el={DOCK[16].el} badge />
        <DockSep />
        {DOCK.slice(17, 20).map((d, i) => (
          <DockSlot key={i} el={d.el} />
        ))}
        <DockSep />
        {DOCK.slice(20).map((d, i) => (
          <DockSlot key={i} el={d.el} />
        ))}
      </div>
    </div>
  );
}
